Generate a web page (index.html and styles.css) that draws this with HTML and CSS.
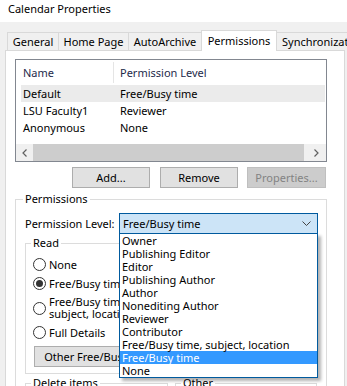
FILE: index.html
```html
<!DOCTYPE html>
<html lang="en">
<head>
  <meta charset="UTF-8" />
  <title>Calendar Properties</title>
  <link rel="stylesheet" href="styles.css">
</head>
<body>

  <div class="titlebar">Calendar Properties</div>

  <div class="dialog">
    <div class="tabs">
      <div class="tab tab--general">General</div>
      <div class="tab tab--home">Home Page</div>
      <div class="tab tab--archive">AutoArchive</div>
      <div class="tab tab--perm active">Permissions</div>
      <div class="tab tab--sync">Synchronization</div>
    </div>

    <div class="page">
      <div class="listview">
        <div class="lv-header">
          <span class="col-name">Name</span>
          <span class="col-level">Permission Level</span>
        </div>
        <div class="lv-row selected"><span class="cell-name">Default</span><span>Free/Busy time</span></div>
        <div class="lv-row"><span class="cell-name">LSU Faculty1</span><span>Reviewer</span></div>
        <div class="lv-row"><span class="cell-name">Anonymous</span><span>None</span></div>
        <div class="hscroll">
          <div class="hs-btn">
            <svg width="5" height="8" viewBox="0 0 5 8"><path d="M4.5 0.5 L1 4 L4.5 7.5" fill="none" stroke="#606060" stroke-width="1.2"/></svg>
          </div>
          <div class="hs-thumb"></div>
          <div class="hs-btn">
            <svg width="5" height="8" viewBox="0 0 5 8"><path d="M0.5 0.5 L4 4 L0.5 7.5" fill="none" stroke="#606060" stroke-width="1.2"/></svg>
          </div>
        </div>
      </div>

      <div class="button-row">
        <button class="btn">Add...</button>
        <button class="btn">Remove</button>
        <button class="btn btn--disabled">Properties...</button>
      </div>

      <fieldset class="group group--permissions">
        <legend>Permissions</legend>
        <div class="level-row">
          <span class="level-label">Permission Level:</span>
          <div class="combo">
            <div class="combo-box">
              <span>Free/Busy time</span>
              <svg width="9" height="5" viewBox="0 0 9 5"><path d="M0.5 0.5 L4.5 4.5 L8.5 0.5" fill="none" stroke="#444" stroke-width="1"/></svg>
            </div>
            <ul class="combo-list">
              <li>Owner</li>
              <li>Publishing Editor</li>
              <li>Editor</li>
              <li>Publishing Author</li>
              <li>Author</li>
              <li>Nonediting Author</li>
              <li>Reviewer</li>
              <li>Contributor</li>
              <li>Free/Busy time, subject, location</li>
              <li class="current">Free/Busy time</li>
              <li>None</li>
            </ul>
          </div>
        </div>

        <div class="group-grid">
          <fieldset class="group group--inner">
            <legend>Read</legend>
            <div class="radio-row first"><span class="radio"></span>None</div>
            <div class="radio-row"><span class="radio radio--checked"></span>Free/Busy time</div>
            <div class="radio-row radio-row--wrap"><span class="radio"></span><span>Free/Busy time,<br>subject, location</span></div>
            <div class="radio-row radio-row--gap"><span class="radio"></span>Full Details</div>
            <button class="btn btn--other">Other Free/Busy...</button>
          </fieldset>

          <fieldset class="group group--inner">
            <legend>Write</legend>
            <div class="radio-row first"><span class="check"></span>Create items</div>
            <div class="radio-row"><span class="check"></span>Create subfolders</div>
            <div class="radio-row"><span class="check"></span>Edit own</div>
            <div class="radio-row"><span class="check"></span>Edit all</div>
          </fieldset>

          <fieldset class="group group--inner">
            <legend>Delete items</legend>
            <div class="radio-row first"><span class="radio"></span>None</div>
            <div class="radio-row"><span class="radio"></span>Own</div>
            <div class="radio-row"><span class="radio"></span>All</div>
          </fieldset>

          <fieldset class="group group--inner">
            <legend>Other</legend>
            <div class="radio-row first"><span class="check"></span>Folder owner</div>
            <div class="radio-row"><span class="check"></span>Folder contact</div>
            <div class="radio-row"><span class="check"></span>Folder visible</div>
          </fieldset>
        </div>
      </fieldset>
    </div>
  </div>

</body>
</html>
```

FILE: styles.css
```css
body {
  margin: 0;
  background: #f0f0f0;
  font-family: "Noto Sans", sans-serif;
  font-size: 11px;
  color: #000;
  overflow: hidden;
}
.titlebar {
  height: 22px;
  line-height: 17px;
  padding-left: 8px;
  background: #fff;
}
.dialog {
  padding: 8px 0 0 5px;
}

/* tab strip */
.tabs {
  display: flex;
  align-items: flex-end;
  height: 21px;
  padding-left: 2px;
  margin-bottom: -1px;
  position: relative;
  z-index: 1;
}
.tab {
  flex: none;
  height: 18px;
  margin: 0 -1px 1px 0;
  border: 1px solid #d9d9d9;
  border-bottom: 0;
  background: #f0f0f0;
  text-align: center;
  line-height: 17px;
  box-sizing: border-box;
  white-space: nowrap;
}
.tab--general { width: 52px; }
.tab--home { width: 71px; }
.tab--archive { width: 74px; }
.tab--perm { width: 76px; }
.tab--sync { padding: 0 5px; text-align: left; }
.tab.active {
  height: 21px;
  margin-bottom: 0;
  background: #fff;
  line-height: 19px;
  position: relative;
  z-index: 2;
}

.page {
  width: 340px;
  height: 400px;
  background: #fff;
  border: 1px solid #d9d9d9;
  padding: 8px 0 0 9px;
  box-sizing: border-box;
}

/* list view */
.listview {
  width: 312px;
  height: 103px;
  border: 1px solid #828790;
  box-sizing: border-box;
  display: flex;
  flex-direction: column;
}
.lv-header {
  display: flex;
  align-items: center;
  height: 25px;
  color: #1e2a4a;
  flex: none;
}
.col-name {
  width: 98px;
  height: 21px;
  line-height: 21px;
  padding-left: 7px;
  border-right: 1px solid #e5e5e5;
  box-sizing: border-box;
}
.col-level {
  padding-left: 6px;
}
.lv-row {
  display: flex;
  height: 17px;
  line-height: 17px;
  margin: 0 1px 0 5px;
  flex: none;
}
.lv-row.selected {
  background: #ebebeb;
}
.cell-name {
  width: 99px;
  padding-left: 2px;
  box-sizing: border-box;
}
.hscroll {
  margin-top: auto;
  height: 17px;
  display: flex;
  background: #f0f0f0;
  flex: none;
}
.hs-btn {
  width: 17px;
  display: flex;
  align-items: center;
  justify-content: center;
}
.hs-thumb {
  width: 271px;
  margin-right: 4px;
  background: #cdcdcd;
}

/* buttons */
.button-row {
  display: flex;
  justify-content: flex-end;
  width: 311px;
  margin-top: 5px;
}
.btn {
  width: 78px;
  height: 21px;
  margin-left: 10px;
  padding: 0;
  border: 1px solid #adadad;
  background: #e1e1e1;
  font: inherit;
  color: #000;
  white-space: nowrap;
}
.btn--disabled {
  width: 79px;
  margin-left: 9px;
  background: #cccccc;
  border-color: #bfbfbf;
  color: #838383;
}

/* group boxes */
.group {
  margin: 0;
  padding: 0 0 0 7px;
  border: 1px solid #dcdcdc;
  min-width: 0;
  box-sizing: border-box;
}
.group legend {
  padding: 0 2px;
  line-height: 16px;
}
.group--permissions {
  width: 312px;
  height: 200px;
  margin-top: 3px;
}
.group--inner {
  padding: 0 0 6px 5px;
}

.level-row {
  display: flex;
  align-items: center;
  height: 21px;
  margin: 6px 0 0 2px;
}
.level-label {
  width: 94px;
}
.combo {
  position: relative;
  width: 199px;
  height: 21px;
}
.combo-box {
  height: 21px;
  box-sizing: border-box;
  border: 1px solid #005a9e;
  background: #cce4f7;
  display: flex;
  align-items: center;
  justify-content: space-between;
  padding: 0 6px 0 3px;
}
.combo-list {
  position: absolute;
  left: 0;
  top: 20px;
  width: 199px;
  margin: 0;
  padding: 0;
  list-style: none;
  background: #fff;
  border: 1px solid #005a9e;
  box-sizing: border-box;
  box-shadow: 3px 3px 3px rgba(0,0,0,0.3);
  z-index: 5;
}
.combo-list li {
  height: 13px;
  line-height: 13px;
  padding-left: 2px;
  white-space: nowrap;
}
.combo-list li.current {
  background: #3399ff;
  color: #fff;
}

.group-grid {
  display: grid;
  grid-template-columns: 143px 142px;
  column-gap: 7px;
  row-gap: 1px;
  margin: 1px 0 0 2px;
}
.radio-row {
  display: flex;
  align-items: center;
  height: 19px;
  margin-left: 2px;
  white-space: nowrap;
}
.radio-row.first {
  margin-top: 4px;
}
.radio-row--wrap {
  height: auto;
  line-height: 12px;
  margin-top: 3px;
}
.radio-row--gap {
  margin-top: 3px;
}
.radio, .check {
  width: 13px;
  height: 13px;
  margin-right: 3px;
  border: 1px solid #333;
  box-sizing: border-box;
  flex: none;
  position: relative;
}
.radio {
  border-radius: 50%;
}
.radio--checked::after {
  content: "";
  position: absolute;
  inset: 2px;
  border-radius: 50%;
  background: #333;
}
.btn--other {
  width: 113px;
  margin: 4px 0 0 3px;
}
```
